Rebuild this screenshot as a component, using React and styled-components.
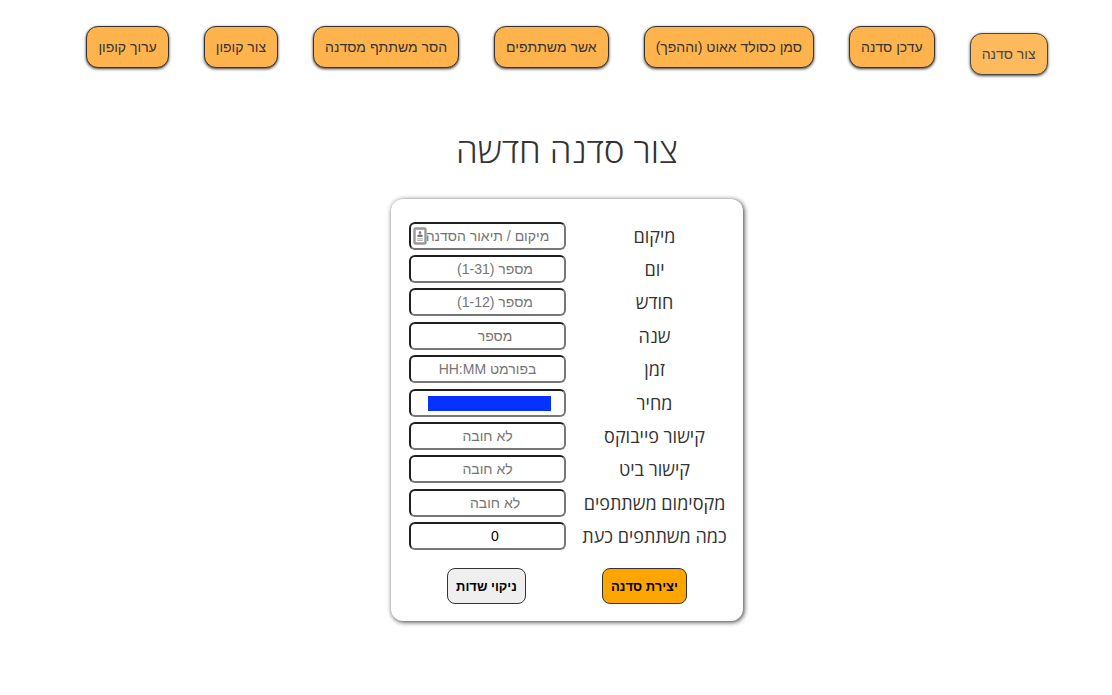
import React from "react";
import styled, { createGlobalStyle } from "styled-components";

const GlobalStyle = createGlobalStyle`
  *, *::before, *::after { box-sizing: border-box; }
  body {
    margin: 0;
    background: #fff;
    color: #333;
    font-family: "Open Sans", "Noto Sans", sans-serif;
  }
`;

const Page = styled.div`
  direction: rtl;
  padding: 26px 0 40px 22px;
`;

const Nav = styled.nav`
  display: flex;
  justify-content: center;
  align-items: flex-start;
  gap: 35px;
  height: 50px;
`;

const NavButton = styled.button`
  height: 42px;
  margin: ${(p) => (p.$active ? "7px 0 0" : "0")};
  padding: 0 11px;
  border: 1px solid #333;
  border-radius: 12px;
  background: #ffb34d;
  color: #333;
  font-family: "Liberation Sans", "Open Sans", sans-serif;
  font-size: 14px;
  font-weight: 400;
  white-space: nowrap;
  box-shadow: 0 1px 3px rgba(0, 0, 0, 0.8);
  opacity: ${(p) => (p.$active ? 0.9 : 1)};
  cursor: pointer;
`;

const Main = styled.main`
  display: flex;
  flex-direction: column;
  align-items: center;
  padding-top: 47px;
`;

const Title = styled.h1`
  margin: 0 0 22px;
  font-size: 35px;
  font-weight: 300;
  line-height: 54px;
`;

const Card = styled.form`
  padding: 20px 18px 17px;
  border-radius: 12px;
  background: #fff;
  box-shadow: 1px 1px 5px #333;
`;

const Fields = styled.div`
  display: grid;
  grid-template-rows: repeat(10, 1fr);
  height: 334px;
`;

const Field = styled.div`
  display: grid;
  grid-template-columns: 141px 157px;
  column-gap: 18px;
  align-items: center;
`;

const Label = styled.label`
  display: flex;
  justify-content: center;
  font-size: 18px;
  font-weight: 400;
  line-height: 24px;
  white-space: nowrap;
`;

const InputWrap = styled.div`
  position: relative;
  display: flex;
`;

const Input = styled.input`
  width: 100%;
  height: 28px;
  margin: 0;
  padding: 1px 2px;
  border: 2px solid;
  border-color: #1f1f1f #767676 #767676 #1f1f1f;
  border-radius: 6px;
  background: #fff;
  color: #000;
  font-family: "Liberation Sans", "Open Sans", sans-serif;
  font-size: 14px;
  text-align: center;
  &::placeholder { color: #757575; }
`;

const Highlight = styled.span`
  position: absolute;
  inset: 7px 15px 6px 19px;
  background: #0432ff;
`;

const ContactIcon = styled.svg`
  position: absolute;
  left: 4px;
  top: 5px;
  width: 14px;
  height: 18px;
`;

const Actions = styled.div`
  display: flex;
  justify-content: space-around;
  margin-top: 15px;
`;

const ActionButton = styled.button`
  height: 36px;
  padding: 0 8px;
  border: 1px solid #333;
  border-radius: 8px;
  background: ${(p) => (p.$primary ? "#ffa500" : "#efefef")};
  color: #000;
  font-family: "Liberation Sans", "Open Sans", sans-serif;
  font-size: 13px;
  font-weight: 700;
  cursor: pointer;
`;

const navItems = [
  "צור סדנה",
  "עדכן סדנה",
  "סמן כסולד אאוט (וההפך)",
  "אשר משתתפים",
  "הסר משתתף מסדנה",
  "צור קופון",
  "ערוך קופון",
];

const fields = [
  { id: "location", label: "מיקום", placeholder: "מיקום / תיאור הסדנה", icon: true },
  { id: "day", label: "יום", placeholder: "מספר (1-31)", type: "number" },
  { id: "month", label: "חודש", placeholder: "מספר (1-12)", type: "number" },
  { id: "year", label: "שנה", placeholder: "מספר", type: "number" },
  { id: "time", label: "זמן", placeholder: "בפורמט HH:MM" },
  { id: "price", label: "מחיר", type: "number", highlight: true },
  { id: "paybox", label: "קישור פייבוקס", placeholder: "לא חובה" },
  { id: "bit", label: "קישור ביט", placeholder: "לא חובה" },
  { id: "max", label: "מקסימום משתתפים", placeholder: "לא חובה", type: "number" },
  { id: "current", label: "כמה משתתפים כעת", type: "number", value: 0 },
];

export default function App() {
  return (
    <Page lang="he">
      <GlobalStyle />
      <Nav>
        {navItems.map((text, i) => (
          <NavButton key={text} type="button" $active={i === 0}>
            {text}
          </NavButton>
        ))}
      </Nav>
      <Main>
        <Title>צור סדנה חדשה</Title>
        <Card onSubmit={(e) => e.preventDefault()}>
          <Fields>
            {fields.map((f) => (
              <Field key={f.id}>
                <Label htmlFor={f.id}>{f.label}</Label>
                <InputWrap>
                  <Input
                    id={f.id}
                    type={f.type || "text"}
                    placeholder={f.placeholder}
                    defaultValue={f.value}
                  />
                  {f.highlight && <Highlight />}
                  {f.icon && (
                    <ContactIcon viewBox="0 0 14 18" aria-hidden="true">
                      <rect x="1.5" y="1.5" width="11" height="15" rx="1" fill="#fff" stroke="#999" strokeWidth="2.4" />
                      <circle cx="7" cy="5.6" r="1.3" fill="#777" />
                      <path d="M4.4 10V8.6Q4.6 7.6 7 7.2Q9.4 7.6 9.6 8.6V10Z" fill="#777" />
                      <path d="M4.2 11.8H9.8M4.2 13.4H9.8" stroke="#aaa" strokeWidth="1" />
                    </ContactIcon>
                  )}
                </InputWrap>
              </Field>
            ))}
          </Fields>
          <Actions>
            <ActionButton type="submit" $primary>
              יצירת סדנה
            </ActionButton>
            <ActionButton type="reset">ניקוי שדות</ActionButton>
          </Actions>
        </Card>
      </Main>
    </Page>
  );
}
